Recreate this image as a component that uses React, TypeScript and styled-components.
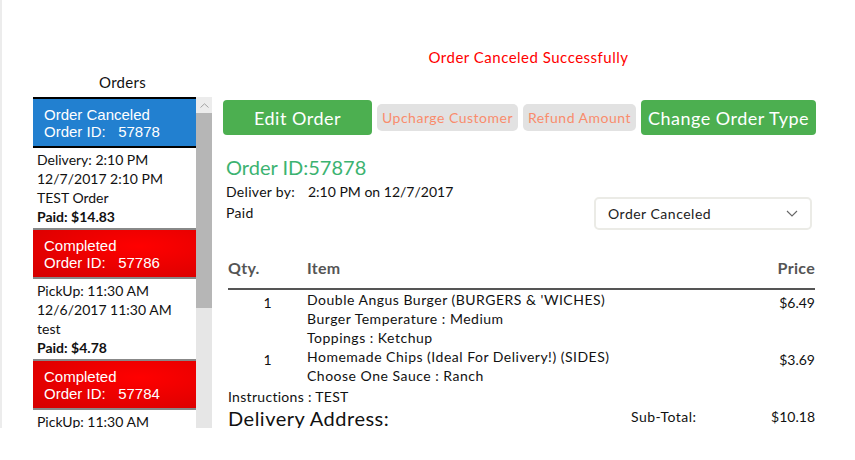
import React from "react"
import styled, { createGlobalStyle } from "styled-components"

const sans = `"Lato", "Noto Sans", sans-serif`
const arial = `"Liberation Sans", Arial, sans-serif`

const GlobalStyle = createGlobalStyle`
  body {
    margin: 0;
    background: #fff;
    font-family: ${sans};
    color: #111;
  }
`

const Page = styled.div`
  display: flex;
  align-items: flex-start;
  height: 428px;
  overflow: hidden;
  border-left: 2px solid #ececec;
`

// ---- sidebar ----

const Sidebar = styled.aside`
  flex: none;
  width: 179px;
  margin-left: 31px;
  padding-top: 73px;
`

const SidebarTitle = styled.div`
  height: 24px;
  font-size: 15px;
  line-height: 18px;
  letter-spacing: 0.3px;
  text-align: center;
`

const ListFrame = styled.div`
  display: flex;
  height: 331px;
`

const OrderList = styled.div`
  flex: none;
  width: 163px;
`

type Status = "canceled" | "completed"

const OrderHeader = styled.div<{ $status: Status; $selected?: boolean }>`
  box-sizing: border-box;
  height: 51px;
  padding: 7px 11px 0;
  border-top: 2px solid ${p => (p.$selected ? "#000" : "#888")};
  border-bottom: 2px solid ${p => (p.$selected ? "#000" : "#888")};
  background: ${p =>
    p.$status === "canceled"
      ? "#2280d0"
      : "radial-gradient(ellipse at 65% 35%, #ff0000 0%, #e80000 55%, #d40000 100%)"};
  color: #fff;
  font-family: ${arial};
  font-size: 15px;
  line-height: 17px;
`

const HeaderLine = styled.div`
  white-space: pre;
`

const OrderDetails = styled.div`
  padding: 2px 4px;
  font-size: 14px;
  line-height: 19px;
  white-space: nowrap;
`

const PaidLine = styled.div`
  font-weight: 700;
`

const Scrollbar = styled.div`
  flex: none;
  display: flex;
  flex-direction: column;
  width: 16px;
  background: #e6e6e6;
`

const ScrollButton = styled.div`
  height: 16px;
  display: flex;
  align-items: center;
  justify-content: center;
  background: #ececec;
`

const ScrollThumb = styled.div`
  height: 195px;
  background: #b6b6b6;
`

// ---- main ----

const Main = styled.main`
  flex: none;
  width: 592px;
  margin-left: 11px;
  padding-top: 47px;
`

const Message = styled.div`
  padding-left: 19px;
  margin-bottom: 33px;
  text-align: center;
  color: #ff0000;
  font-size: 15px;
  line-height: 20px;
  letter-spacing: 0.5px;
`

const ButtonRow = styled.div`
  display: flex;
  align-items: center;
  gap: 5px;
  height: 35px;
`

const PrimaryButton = styled.button<{ $width: number }>`
  flex: none;
  width: ${p => p.$width}px;
  height: 35px;
  padding: 0;
  border: none;
  border-radius: 4px;
  background: #4caf50;
  color: #fff;
  font-family: ${sans};
  font-size: 18px;
  letter-spacing: 0.5px;
  white-space: nowrap;
  overflow: hidden;
`

const SecondaryButton = styled.button<{ $width: number }>`
  flex: none;
  width: ${p => p.$width}px;
  height: 27px;
  padding: 0;
  border: none;
  border-radius: 5px;
  background: #e2e2e2;
  color: #f98c6c;
  font-family: ${sans};
  font-size: 14px;
  letter-spacing: 0.5px;
  white-space: nowrap;
  overflow: hidden;
`

const OrderTitle = styled.div`
  margin-top: 20px;
  padding-left: 3px;
  color: #3cb371;
  font-size: 20px;
  line-height: 24px;
`

const InfoRow = styled.div`
  display: flex;
  justify-content: space-between;
  align-items: flex-end;
`

const InfoLines = styled.div`
  padding: 3px 0 6px 3px;
  font-size: 14px;
`

const DeliverLine = styled.div`
  line-height: 20px;
`

const InfoLabel = styled.span`
  display: inline-block;
  width: 82px;
  letter-spacing: 0.3px;
`

const PaidText = styled.div`
  line-height: 22px;
  letter-spacing: 0.3px;
`

const StatusSelect = styled.div`
  display: flex;
  align-items: center;
  justify-content: space-between;
  box-sizing: border-box;
  width: 218px;
  height: 33px;
  margin-right: 3px;
  padding: 0 12px;
  border: 2px solid #ebebe6;
  border-radius: 5px;
  font-size: 14px;
  letter-spacing: 0.5px;
  color: #222;
`

const Table = styled.div`
  margin-top: 28px;
  margin-left: 5px;
`

const Grid = styled.div`
  display: grid;
  grid-template-columns: 79px 1fr auto;
`

const HeadRow = styled(Grid)`
  padding-bottom: 10px;
  border-bottom: 2px solid #555;
  color: #555;
  font-size: 16px;
  font-weight: 700;
  line-height: 20px;
  letter-spacing: 0.3px;
`

const ItemRow = styled(Grid)`
  font-size: 14px;
  line-height: 19px;
`

const QtyCell = styled.div`
  padding-top: 3px;
  text-align: center;
`

const ItemLines = styled.div`
  letter-spacing: 0.5px;
`

const PriceCell = styled.div`
  padding-top: 3px;
  text-align: right;
`

const Instructions = styled.div`
  margin-top: 2px;
  font-size: 14px;
  line-height: 19px;
  letter-spacing: 0.3px;
`

const BottomRow = styled.div`
  display: flex;
  align-items: flex-start;
`

const AddressTitle = styled.div`
  font-size: 20px;
  line-height: 24px;
  letter-spacing: 0.5px;
`

const Totals = styled.div`
  display: flex;
  justify-content: space-between;
  width: 184px;
  margin-left: auto;
  padding-top: 1px;
  font-size: 14px;
  line-height: 19px;
`

const SubLabel = styled.span`
  letter-spacing: 0.5px;
`

interface Order {
  id: string
  status: Status
  label: string
  when: string
  date: string
  note: string
  paid: string
}

const orders: Order[] = [
  { id: "57878", status: "canceled", label: "Order Canceled", when: "Delivery: 2:10 PM", date: "12/7/2017 2:10 PM", note: "TEST Order", paid: "$14.83" },
  { id: "57786", status: "completed", label: "Completed", when: "PickUp: 11:30 AM", date: "12/6/2017 11:30 AM", note: "test", paid: "$4.78" },
  { id: "57784", status: "completed", label: "Completed", when: "PickUp: 11:30 AM", date: "12/6/2017 11:30 AM", note: "test", paid: "$4.78" },
]

const items = [
  { qty: 1, lines: ["Double Angus Burger (BURGERS & 'WICHES)", "Burger Temperature : Medium", "Toppings : Ketchup"], price: "$6.49" },
  { qty: 1, lines: ["Homemade Chips (Ideal For Delivery!) (SIDES)", "Choose One Sauce : Ranch"], price: "$3.69" },
]

const Chevron = () => (
  <svg width="12" height="7" viewBox="0 0 12 7">
    <polyline points="1,1 6,6 11,1" fill="none" stroke="#666" strokeWidth="1.1" />
  </svg>
)

const ScrollCaret = () => (
  <svg width="9" height="5" viewBox="0 0 9 5">
    <polyline points="0.5,4.5 4.5,0.8 8.5,4.5" fill="none" stroke="#a3a3a3" strokeWidth="1" />
  </svg>
)

export default function App() {
  return (
    <>
      <GlobalStyle />
      <Page>
        <Sidebar>
          <SidebarTitle>Orders</SidebarTitle>
          <ListFrame>
            <OrderList>
              {orders.map((o, i) => (
                <div key={o.id}>
                  <OrderHeader $status={o.status} $selected={i === 0}>
                    <HeaderLine>{o.label}</HeaderLine>
                    <HeaderLine>{`Order ID:   ${o.id}`}</HeaderLine>
                  </OrderHeader>
                  <OrderDetails>
                    <div>{o.when}</div>
                    <div>{o.date}</div>
                    <div>{o.note}</div>
                    <PaidLine>Paid: {o.paid}</PaidLine>
                  </OrderDetails>
                </div>
              ))}
            </OrderList>
            <Scrollbar>
              <ScrollButton>
                <ScrollCaret />
              </ScrollButton>
              <ScrollThumb />
            </Scrollbar>
          </ListFrame>
        </Sidebar>

        <Main>
          <Message>Order Canceled Successfully</Message>
          <ButtonRow>
            <PrimaryButton $width={149}>Edit Order</PrimaryButton>
            <SecondaryButton $width={141}>Upcharge Customer</SecondaryButton>
            <SecondaryButton $width={113}>Refund Amount</SecondaryButton>
            <PrimaryButton $width={175}>Change Order Type</PrimaryButton>
          </ButtonRow>

          <OrderTitle>Order ID:57878</OrderTitle>
          <InfoRow>
            <InfoLines>
              <DeliverLine>
                <InfoLabel>Deliver by:</InfoLabel>2:10 PM on 12/7/2017
              </DeliverLine>
              <PaidText>Paid</PaidText>
            </InfoLines>
            <StatusSelect>
              <span>Order Canceled</span>
              <Chevron />
            </StatusSelect>
          </InfoRow>

          <Table>
            <HeadRow>
              <div>Qty.</div>
              <div>Item</div>
              <div>Price</div>
            </HeadRow>
            {items.map((it, i) => (
              <ItemRow key={i}>
                <QtyCell>{it.qty}</QtyCell>
                <ItemLines>
                  {it.lines.map(l => (
                    <div key={l}>{l}</div>
                  ))}
                </ItemLines>
                <PriceCell>{it.price}</PriceCell>
              </ItemRow>
            ))}
            <Instructions>Instructions : TEST</Instructions>
            <BottomRow>
              <AddressTitle>Delivery Address:</AddressTitle>
              <Totals>
                <SubLabel>Sub-Total:</SubLabel>
                <span>$10.18</span>
              </Totals>
            </BottomRow>
          </Table>
        </Main>
      </Page>
    </>
  )
}
